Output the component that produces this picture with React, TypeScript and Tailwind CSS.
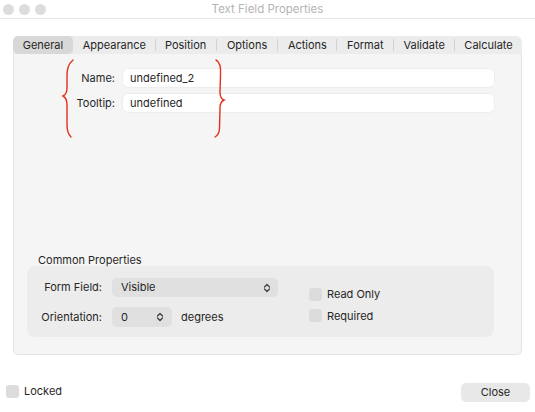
import React from "react";

const tabs = [
  { label: "General", w: "w-[60px]" },
  { label: "Appearance", w: "w-[81px]" },
  { label: "Position", w: "w-[60px]" },
  { label: "Options", w: "w-[61px]" },
  { label: "Actions", w: "w-[58px]" },
  { label: "Format", w: "w-[56px]" },
  { label: "Validate", w: "w-[60px]" },
  { label: "Calculate", w: "w-[67px]" },
];

function Stepper() {
  return (
    <svg width="8" height="10" viewBox="0 0 8 10" className="shrink-0">
      <path d="M1.5 4 L4 1.5 L6.5 4" fill="none" stroke="#3a3a3a" strokeWidth="1.2" strokeLinecap="round" strokeLinejoin="round" />
      <path d="M1.5 6 L4 8.5 L6.5 6" fill="none" stroke="#3a3a3a" strokeWidth="1.2" strokeLinecap="round" strokeLinejoin="round" />
    </svg>
  );
}

function Check({ label }: { label: string }) {
  return (
    <label className="flex items-center gap-[5px]">
      <span className="h-[13px] w-[13px] rounded-[3px] bg-[#dcdcdc]" />
      <span>{label}</span>
    </label>
  );
}

export default function App() {
  return (
    <div
      className="relative flex h-[412px] w-[535px] flex-col overflow-hidden bg-white text-[11px] text-[#262626]"
      style={{ fontFamily: "Inter, 'Noto Sans', sans-serif" }}
    >
      {/* title bar */}
      <div className="relative flex h-[19px] items-center border-b border-[#e6e6e6] px-[3px]">
        <div className="flex gap-[5px]">
          <span className="h-[11px] w-[11px] rounded-full bg-[#dddddd]" />
          <span className="h-[11px] w-[11px] rounded-full bg-[#dddddd]" />
          <span className="h-[11px] w-[11px] rounded-full bg-[#dddddd]" />
        </div>
        <span className="absolute left-0 right-0 top-[1px] text-center text-[11.5px] text-[#b4b4b4]">
          Text Field Properties
        </span>
      </div>

      <div className="mt-[17px] px-[13px]">
        {/* tabs */}
        <div className="flex h-[18px] w-[509px] items-center rounded-t-[6px] bg-[#ececec]">
          {tabs.map((t, i) => (
            <React.Fragment key={t.label}>
              {i > 1 && <span className="h-[12px] w-px bg-[#d2d2d2]" />}
              <div
                className={`flex h-full ${t.w} items-center justify-center ${
                  i === 0 ? "rounded-[5px] bg-[#d8d8d8]" : ""
                } ${i === 1 ? "ml-px" : ""}`}
              >
                {t.label}
              </div>
            </React.Fragment>
          ))}
        </div>

        {/* panel */}
        <div className="flex h-[301px] w-[509px] flex-col rounded-b-[5px] border border-t-0 border-[#e4e4e4] bg-[#f5f5f5]">
          <div className="mt-[15px] grid grid-cols-[88px_371px] items-center gap-x-[8px] gap-y-[7px] pl-[13px]">
            <span className="text-right">Name:</span>
            <div className="flex h-[18px] items-center rounded-[5px] bg-white px-[7px] shadow-[0_0_0_0.5px_#e6e6e6]">
              undefined_2
            </div>
            <span className="text-right">Tooltip:</span>
            <div className="flex h-[18px] items-center rounded-[5px] bg-white px-[7px] shadow-[0_0_0_0.5px_#e6e6e6]">
              undefined
            </div>
          </div>

          <div className="mt-auto pb-[17px] pl-[13px]">
            <div className="mb-[-2px] pl-[11px]">Common Properties</div>
            <div className="flex w-[467px] rounded-[8px] bg-[#ececec] pb-[10px] pt-[12px]">
              <div className="grid grid-cols-[75px_auto] items-center gap-x-[10px] gap-y-[10px]">
                <span className="text-right">Form Field:</span>
                <div className="flex h-[19px] w-[166px] items-center justify-between rounded-[5px] bg-[#e0e0e0] pl-[9px] pr-[7px]">
                  <span>Visible</span>
                  <Stepper />
                </div>
                <span className="text-right">Orientation:</span>
                <div className="flex items-center gap-[9px]">
                  <div className="flex h-[20px] w-[60px] items-center justify-between rounded-[5px] bg-[#e0e0e0] pl-[9px] pr-[8px]">
                    <span>0</span>
                    <Stepper />
                  </div>
                  <span>degrees</span>
                </div>
              </div>
              <div className="ml-[31px] mt-[8px] flex flex-col gap-[5px]">
                <Check label="Read Only" />
                <Check label="Required" />
              </div>
            </div>
          </div>
        </div>
      </div>

      {/* bottom */}
      <div className="mt-[28px] flex items-start justify-between pl-[6px] pr-[5px]">
        <Check label="Locked" />
        <button className="h-[19px] w-[69px] rounded-[5px] bg-[#e8e8e8] text-[11px] text-[#262626]">
          Close
        </button>
      </div>

      {/* red annotation braces */}
      <svg className="pointer-events-none absolute left-0 top-0" width="535" height="412">
        <path
          d="M73 60 C68 64 66.5 70 67 78 L67 88 C67 92 66 94.5 63 96 C66 97.5 67 100 67 105 L67 125 C67 131 68 134 71 137"
          fill="none"
          stroke="#e2311d"
          strokeWidth="1.4"
          strokeLinecap="round"
        />
        <path
          d="M216 60 C220 62 221 68 220.5 75 L220 92 C220 96 221 99 224 100 C221 101.5 220 104 220 108 L219.5 128 C219.5 132 218.5 135 215 137"
          fill="none"
          stroke="#e2311d"
          strokeWidth="1.4"
          strokeLinecap="round"
        />
      </svg>
    </div>
  );
}
